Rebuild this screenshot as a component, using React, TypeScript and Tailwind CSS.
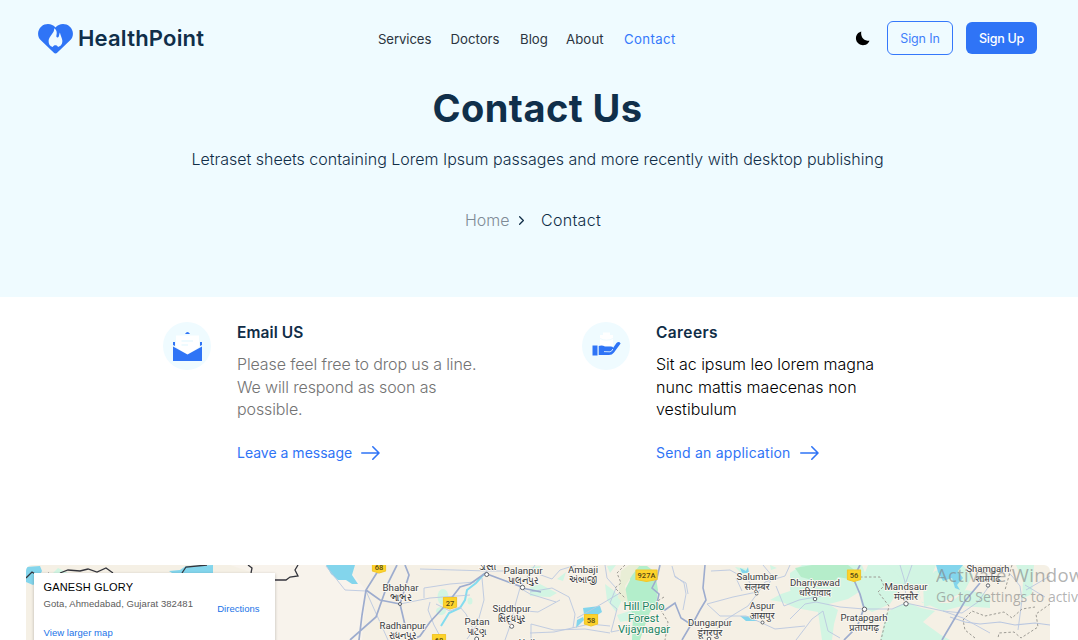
import React from "react";
import { FiChevronRight } from "react-icons/fi";

const navItems = [
  { label: "Services", cls: "w-[53.5px] tracking-[-0.1px] text-[#2b3440]" },
  { label: "Doctors", cls: "w-[50.5px] text-[#2b3440]" },
  { label: "Blog", cls: "w-[27px] text-[#2b3440]" },
  { label: "About", cls: "w-[39px] tracking-[0.1px] text-[#2b3440]" },
  { label: "Contact", cls: "w-[52px] tracking-[0.4px] text-[#3478fb]" },
];

function Logo() {
  return (
    <svg className="mt-px h-[30px] w-[35px]" viewBox="0 0 35 30">
      <path
        d="M17.5 3.6C14.5-.6 7.600-1.200 3.400 2.400C-.9 6.200-.9 12.400 2.600 16L15.600 28.500Q17.500 30.300 19.400 28.500L32.400 16C35.900 12.400 35.900 6.200 31.600 2.400C27.400-1.200 20.500-.6 17.500 3.600Z"
        fill="#2f74f6"
      />
      <path
        d="M16.200 4.200C16.600 9.300 11 11.600 10.600 16.800C10.400 20.300 12 22.300 14.800 23C15.500 20.800 19.300 20.800 20 23C23 22.200 24.700 19.700 24.300 16.300C24 13.600 22.400 11.200 21.900 8.400C21.100 10 21.300 12.600 19.900 13.500C18.600 13.800 18 12.500 18.500 11C19.200 8 18.500 5.600 16.200 4.200Z"
        fill="#effbff"
      />
    </svg>
  );
}

function Header() {
  return (
    <header className="flex h-[76px] items-center pr-[41px] pl-[38px]">
      <div className="flex w-[340px] items-center gap-[5px]">
        <Logo />
        <span className="text-[22px] leading-8 font-semibold tracking-[0.2px] text-[#102f4a]">HealthPoint</span>
      </div>
      <nav className="mt-px flex gap-[19px] text-[13.200px] leading-5 whitespace-nowrap">
        {navItems.map((item) => (
          <a key={item.label} href="#" className={item.cls}>
            {item.label}
          </a>
        ))}
      </nav>
      <div className="ml-auto flex items-center">
        <svg className="mr-[17px] h-[15px] w-[15px]" viewBox="0 0 16 16">
          <path d="M6.700 .4C5.700 6.300 9.400 10.600 15.500 10.400A7.500 7.500 0 1 1 6.700 .4Z" fill="#000" />
        </svg>
        <button className="mr-[13px] h-[34px] w-[66px] rounded-md border border-[#3478fb] pt-[2px] text-[12.500px] tracking-[-0.15px] whitespace-nowrap text-[#3f7ffa]">
          Sign In
        </button>
        <button className="h-8 w-[71px] rounded-md bg-[#2f74f6] pt-[2px] text-[12.500px] font-medium tracking-[-0.25px] whitespace-nowrap text-white">
          Sign Up
        </button>
      </div>
    </header>
  );
}

function EmailIcon() {
  return (
    <svg className="h-12 w-12 shrink-0" viewBox="0 0 48 48">
      <circle cx="24" cy="24" r="24" fill="#effbff" />
      <path d="M22 12Q24.500 8 27 12ZM10 20h2v4l-2-1ZM39 20h-2v4l2-1Z" fill="#2f74f6" />
      <path d="M13 13.500H36V25L24.500 33L13 25Z" fill="#fff" />
      <path d="M18.500 19H30M18.500 23H25" stroke="#effbff" strokeWidth="1.800" />
      <path d="M10 24.500L24.500 32.500L39 24.500V39H10Z" fill="#2f74f6" />
    </svg>
  );
}

function CareersIcon() {
  return (
    <svg className="h-12 w-12 shrink-0" viewBox="0 0 48 48">
      <circle cx="24" cy="24" r="24" fill="#effbff" />
      <path d="M18 13h3v-2.500h7V13h3v11H18Z" fill="#fff" />
      <path d="M18 16.500Q24.500 20 31 16.500" stroke="#effbff" fill="none" />
      <path d="M10.500 23.500H15.500V33.500H10.500Z" fill="#2f74f6" />
      <path
        d="M16.700 24Q20 23 23 24.500L29 24.500Q31.500 24.800 31 26L34.500 21Q37 19 38.600 21.500L32 30.500Q30 33 27 33H16.700Z"
        fill="#2f74f6"
      />
      <path d="M22 29.600L28 29.800Q30 29.500 30.800 27" fill="none" stroke="#effbff" strokeWidth="0.800" />
    </svg>
  );
}

function Arrow() {
  return (
    <svg className="h-4 w-5" viewBox="0 0 20 16">
      <path
        d="M0.800 8H17.800M11.800 1.800L18 8L11.800 14.200"
        fill="none"
        stroke="#2f74f6"
        strokeWidth="1.600"
        strokeLinecap="round"
        strokeLinejoin="round"
      />
    </svg>
  );
}

type CardProps = {
  icon: React.ReactNode;
  title: React.ReactNode;
  body: React.ReactNode;
  link: React.ReactNode;
};

function ContactCard({ icon, title, body, link }: CardProps) {
  return (
    <article className="flex w-[419px] gap-[26px]">
      {icon}
      <div className="whitespace-nowrap">
        <h3 className="text-[15.5px] leading-[22px] font-semibold text-[#102d47]">{title}</h3>
        {body}
        <a href="#" className="mt-[21px] flex items-center gap-[9px] text-[14px] leading-[22px] text-[#2f74f6]">
          {link}
          <Arrow />
        </a>
      </div>
    </article>
  );
}

type Place = { x: number; y: number; name: string; local: string; w: number; lw: number };

const places: Place[] = [
  { x: 400.500, y: 591, name: "Bhabhar", local: "ભાભર", w: 36, lw: 22 },
  { x: 402.500, y: 629, name: "Radhanpur", local: "રાધનપુર", w: 46, lw: 27 },
  { x: 523, y: 574, name: "Palanpur", local: "પાલનપુર", w: 39, lw: 30 },
  { x: 511.500, y: 612, name: "Siddhpur", local: "સિદ્ધપુર", w: 38, lw: 28 },
  { x: 477, y: 625, name: "Patan", local: "પાટણ", w: 25, lw: 20 },
  { x: 583, y: 573, name: "Ambaji", local: "અંબાજી", w: 30, lw: 28 },
  { x: 757, y: 580, name: "Salumbar", local: "सलूम्बर", w: 41, lw: 25 },
  { x: 762, y: 609, name: "Aspur", local: "आसपुर", w: 25, lw: 25 },
  { x: 710, y: 626, name: "Dungarpur", local: "डूंगरपुर", w: 44, lw: 25 },
  { x: 815, y: 586, name: "Dhariyawad", local: "धरियावाद", w: 50, lw: 32 },
  { x: 906, y: 590, name: "Mandsaur", local: "मंदसौर", w: 43, lw: 24 },
  { x: 864, y: 621, name: "Pratapgarh", local: "प्रतापगढ़", w: 47, lw: 30 },
  { x: 988, y: 572, name: "Shamgarh", local: "शामगढ़", w: 43, lw: 25 },
];

const shields = [
  { x: 379, y: 567, w: 13, label: "68" },
  { x: 450, y: 603, w: 13, label: "27" },
  { x: 439, y: 640, w: 13, label: "68" },
  { x: 591, y: 620, w: 13, label: "58" },
  { x: 646.500, y: 575.500, w: 21, label: "927A" },
  { x: 854, y: 575.500, w: 13, label: "56" },
];

const towns = [
  [486.700, 574.500, 2], [522.500, 587.500, 2.200], [400, 604, 1.500], [511.700, 626.300, 2], [476.700, 639, 2],
  [756.700, 593.500, 1.500], [762.500, 622.500, 1.500], [709, 639, 1.800], [815, 599, 1.800], [864.500, 609.300, 2.200],
  [906, 603.800, 2.200], [988, 585.500, 1.700],
];

function MapArt() {
  return (
    <svg className="block h-[75px] w-[1024px]" viewBox="26 565 1024 75">
      <rect x="26" y="565" width="1024" height="75" fill="#f5f0e5" />
      <path d="M230 565H345L366 590L362 640H275V580Z" fill="#f8f3ec" />
      <g fill="#d2f5e3">
        <path d="M53 573L58 568L68 573Z" />
        <ellipse cx="443" cy="597" rx="5.500" ry="8" />
        <ellipse cx="441" cy="611" rx="5" ry="4" />
        <ellipse cx="470" cy="601" rx="2.500" ry="3.500" />
        <path d="M530 587L540 584L557 593L550 597L530 596ZM557 579L566 572L563 581ZM530 567L541 566L537 571ZM605 584L613 590L622 600L616 612L607 600ZM607 566L616 565L610 573Z" />
        <path d="M617 615L633 610L632 620L620 622ZM735 567L749 569L743 575ZM770 565L777 568L771 570Z" />
        <path d="M770 600L781 594L790 591L800 587L814 594L830 605L838 610L834 624L832 640H822L818 612L796 608L782 602ZM790 573L802 565H862L869 583L856 594L848 599L833 603L815 607L800 604L790 590Z" />
        <path d="M868 565H890L912 577L917 584L898 591L890 604L872 612L862 606L858 590Z" />
        <path d="M887 612L906 602L921 608L935 611L923 622L941 635L950 640H880ZM888 565H936L930 580L919 592L922 603L950 603L966 590L990 595L990 608L962 606L943 611L922 602L915 586L903 580ZM1016 565H1034L1032 594L1022 599L1023 581ZM962 565L973 575L964 592L944 601L924 607L923 583L935 571Z" />
      </g>
      <path d="M628 566H647L655 572L658 590L656 606L650 612L644 628L640 640H632L633 615L628 603L624 592L630 580Z" fill="#b3eecb" />
      <path d="M621 571L629 565H640L633 574L625 586L629 608L618 598Z" fill="#e9eed6" />
      <path d="M795 568L812 565H848L857 572L849 579L838 577L832 585L812 580L801 577Z" fill="#b5edca" />
      <g fill="#83d5ec">
        <path d="M26 567L40 566L42 571L36 583L33 585L26 582Z" />
        <path d="M169 571L180 570L186 566L213 565V573H172Z" />
        <path d="M326 565H355L352 575L358 584L352 584L346 580L338 580L331 574Z" />
        <path d="M583 608L600 606L602 612L596 616L584 614ZM577 620L583 617L584 620L576 628Z" />
        <path d="M740 568L746 571L748 567L749 573H742ZM740 616L754 617L757 621L746 621ZM936 565H963L958 571L963 578L957 585L960 590L955 588L952 578L943 581L938 572Z" />
      </g>
      <path d="M484 574L476 583L467 590L465 600L460 608L449 613L441 626" fill="none" stroke="#83dcef" strokeWidth="2" />
      <g fill="none" stroke="#bac7e0" strokeWidth="0.900">
        <path d="M326 566L345 590L366 591L388 640M420 569L455 570L487 571L530 571M400 604L430 598L470 595M424 598L424 588L450 584L475 582M430 602L428 610L434 625L442 640M436 604L450 611L460 607L466 614L477 638M482 578L484 600L477 625L467 639M505 640L510 626L516 602L520 588L530 594L556 602M520 588L535 565M531 640V624L554 630L585 629L610 633" />
        <path d="M530 592L552 588L569 597L575 614L573 628M530 571L552 579L560 570L576 565M577 618L598 606L620 593M605 565L607 578L616 588L610 603L617 609L611 632L636 627M560 600L538 612L526 611M675 576L684 583L686 594L683 610M530 633L554 632L590 624L610 626" />
        <path d="M672 566L675 577L686 583L688 594M707 604L733 597L757 592L748 580L730 570L711 571M707 604L720 616L746 616L762 623L775 629L805 626M736 578L742 591M709 640L722 622L738 612L748 606L757 594L765 582L785 576L790 565M776 586L784 606L799 600L816 597L830 595M790 619L805 604L816 602L840 607L864 609M763 565L773 577L767 587M796 640L812 619L823 611L828 631L840 638" />
        <path d="M864 609H892L906 603L943 611L963 618L990 633M900 565L905 582L906 604M912 565L906 582M943 611L962 613L978 602L989 586M1000 565L1012 576L1020 586L1022 600L1018 630M1026 590L1050 576M1025 585L1045 597" />
        <path d="M950 617L965 622L980 624L1000 622L1015 625L1035 623L1050 625" strokeWidth="1.200" />
      </g>
      <g fill="none" stroke="#9dacce" strokeWidth="1.700">
        <path d="M378 571L366 590L362 615L359 640M397 565L388 583L376 617L350 640M405 565L409 575L400 604L405 625M366 590L380 600L400 604M487 572L470 584L460 587L450 600L442 609L430 622L420 636L412 640M487 574L522 587M522 588L541 592" />
        <path d="M660 565L657 578L652 588L659 594L657 603L665 610L675 603L681 618L692 625L700 610L706 600L703 588L705 565M692 623L682 640" strokeWidth="1.600" />
        <path d="M854 580L860 594L864 608L857 627L844 640M980 583L965 601L942 640M860 565L855 575" />
      </g>
      <g fill="none" stroke="#9d9b94" strokeWidth="1" strokeDasharray="2.500 2">
        <path d="M625 565L617 573L621 583L615 588L625 598M664 597L656 602L668 622L665 640M860 577L880 577L884 586L878 592L889 606L881 640M1050 604L1036 614L1038 627L1021 638L1014 632L999 633L998 638M975 638L965 630L963 620L972 611L985 616L1004 612L1012 618L1022 609L1035 607M1012 565L1005 590" />
      </g>
      <g fill="none" stroke="#34353c" strokeWidth="1.300">
        <path d="M26 578L32 572L40 577L49 573M60 573L68 570L80 571L88 569L97 572L106 568L113 573M182 573L186 567L207 565M248 565L252 568L251 573M275 580H286L290 577L298 576L295 570L298 565" />
      </g>
      {towns.map(([x, y, r]) => (
        <circle key={`${x}-${y}`} cx={x} cy={y} r={r} fill="#fff" stroke="#5c6066" />
      ))}
      <g
        fontFamily="Roboto, 'Noto Sans', sans-serif"
        fontSize="9.700"
        fill="#3a3d42"
        stroke="#fbf8f2"
        strokeWidth="1.800"
        strokeLinejoin="round"
        paintOrder="stroke"
        textAnchor="middle"
      >
        <text x="487" y="570" textLength="17" lengthAdjust="spacingAndGlyphs">ડીસા</text>
        {places.map((p) => (
          <React.Fragment key={p.name}>
            <text x={p.x} y={p.y} textLength={p.w} lengthAdjust="spacingAndGlyphs">{p.name}</text>
            <text x={p.x} y={p.y + 9.500} textLength={p.lw} lengthAdjust="spacingAndGlyphs">{p.local}</text>
          </React.Fragment>
        ))}
        <text x="531" y="646">Unjha</text>
        <g fill="#218563" fontSize="11">
          <text x="644" y="610" textLength="41" lengthAdjust="spacingAndGlyphs">Hill Polo</text>
          <text x="643.500" y="621.500" textLength="31" lengthAdjust="spacingAndGlyphs">Forest</text>
          <text x="644" y="633" textLength="52" lengthAdjust="spacingAndGlyphs">Vijaynagar</text>
        </g>
      </g>
      {shields.map((s) => (
        <g key={`${s.x}-${s.y}`}>
          <path
            d={`M${s.x - s.w / 2} ${s.y - 5.5}h${s.w}v9.5l-${s.w / 2} 2l-${s.w / 2} -2Z`}
            fill="#fdd32b"
            stroke="#f2c72b"
            strokeWidth="1.200"
            strokeLinejoin="round"
          />
          <text x={s.x} y={s.y + 2.800} textAnchor="middle" fontFamily="Roboto, sans-serif" fontSize="7.500" fontWeight="500" fill="#554715">
            {s.label}
          </text>
        </g>
      ))}
    </svg>
  );
}

function MapSection() {
  return (
    <section className="relative mt-[101px] ml-[26px] h-[75px] w-[1052px]">
      <div className="w-[1024px] overflow-hidden rounded-t-[6px]">
        <MapArt />
      </div>
      <div className="absolute top-2 left-2 flex h-[90px] w-[241px] justify-between bg-white pr-[15.500px] pl-[9.500px] font-['Liberation_Sans',Arial,sans-serif] whitespace-nowrap shadow-[0_1px_3px_rgba(0,0,0,0.25)]">
        <div>
          <h4 className="mt-[7px] text-[11px] leading-[14px] tracking-[0.15px] text-black">GANESH GLORY</h4>
          <p className="mt-[4px] text-[9.500px] leading-[12px] tracking-[0.07px] text-[#5b5b5b]">Gota, Ahmedabad, Gujarat 382481</p>
          <a href="#" className="mt-[17px] block text-[9.500px] leading-[12px] tracking-[0.05px] text-[#1a73e8]">View larger map</a>
        </div>
        <a href="#" className="mt-[30px] text-[9.500px] leading-[12px] text-[#1a73e8]">Directions</a>
      </div>
      <div className="absolute top-[-3px] left-[910px] w-[142px] overflow-hidden font-['Open_Sans','Noto_Sans',sans-serif] whitespace-nowrap text-[#808080]/60">
        <p className="text-[18.500px] leading-[25px] tracking-[0.3px]">Activate Windows</p>
        <p className="text-[14px] leading-[20px]">Go to Settings to activate Windows.</p>
      </div>
    </section>
  );
}

export default function App() {
  return (
    <div className="h-[640px] w-[1078px] overflow-hidden bg-white font-['Inter',sans-serif]">
      <div className="h-[297px] bg-[#effbff] text-center">
        <div className="text-left">
          <Header />
        </div>
        <h1 className="mt-[8px] pr-[3px] text-[38px] leading-[48px] font-bold tracking-[0.45px] text-[#102f4a]">Contact Us</h1>
        <p className="mt-[15px] pr-[3px] text-[16px] leading-6 font-light tracking-[-0.005px] text-[#102d47]">
          Letraset sheets containing Lorem Ipsum passages and more recently with desktop publishing
        </p>
        <div className="mt-[37px] flex items-center pl-[465px] text-[16px] leading-6 font-light text-[#102d47]">
          <a href="#" className="w-[44px] text-left whitespace-nowrap text-[#7f8b96]">Home</a>
          <FiChevronRight className="mt-px mr-[12px] ml-[5px] h-[15px] w-[15px]" />
          <span className="tracking-[0.3px]">Contact</span>
        </div>
      </div>
      <main>
        <section className="flex pt-[25px] pl-[163px]">
          <ContactCard
            icon={<EmailIcon />}
            title={<span className="tracking-[0.1px]">Email US</span>}
            body={
              <p className="mt-[9px] text-[16px] leading-[22.500px] font-light tracking-[-0.12px] text-[#737373]">
                <span className="block">Please feel free to drop us a line.</span>
                <span className="block">We will respond as soon as</span>
                <span className="block">possible.</span>
              </p>
            }
            link={<span className="w-[115px]">Leave a message</span>}
          />
          <ContactCard
            icon={<CareersIcon />}
            title={<span className="tracking-[0.4px]">Careers</span>}
            body={
              <p className="mt-[9px] text-[16px] leading-[22.500px] font-light text-black">
                <span className="block tracking-[-0.03px]">Sit ac ipsum leo lorem magna</span>
                <span className="block tracking-[0.04px]">nunc mattis maecenas non</span>
                <span className="block">vestibulum</span>
              </p>
            }
            link={<span className="w-[135px] tracking-[0.22px]">Send an application</span>}
          />
        </section>
        <MapSection />
      </main>
    </div>
  );
}
